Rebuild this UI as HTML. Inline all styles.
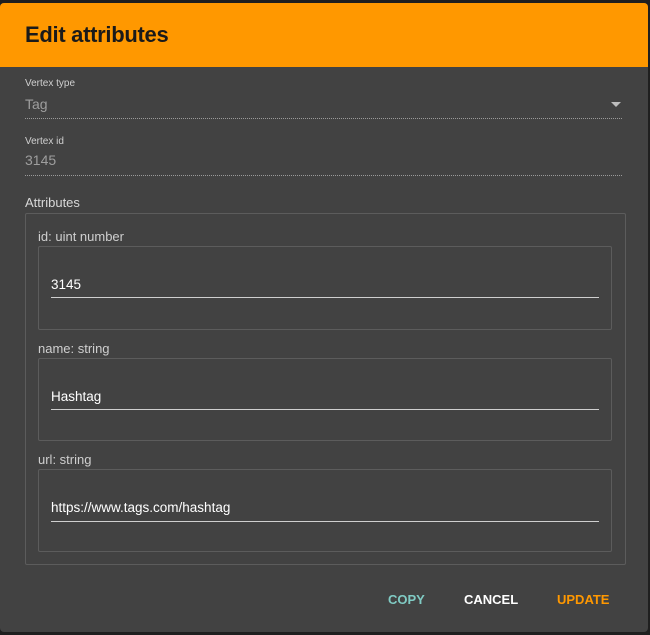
<!DOCTYPE html>
<html><head><style>
*{margin:0;padding:0;box-sizing:border-box}
body{width:650px;height:635px;background:#1f1f1f;font-family:"Liberation Sans",sans-serif;position:relative;overflow:hidden}
.dlg{position:absolute;left:0;top:3px;width:648px;height:629px;background:#424242;border-radius:4px;overflow:hidden}
.hdr{position:absolute;left:0;top:0;width:100%;height:64px;background:#ff9800}
.hdr h1{position:absolute;left:25px;top:19px;font-size:22px;font-weight:bold;color:#1a1a1a;letter-spacing:-0.3px}
.a{position:absolute}
.lbl{font-size:10px;color:#d0d0d0}
.val{font-size:14px;color:#9e9e9e}
.dot{position:absolute;left:25px;width:597px;border-top:1px dotted #9a9a9a;height:0}
.box{position:absolute;border:1px solid #5c5c5c;border-radius:2px}
.fl{font-size:13px;color:#cfcfcf}
.in{font-size:13.5px;color:#fff}
.ul{position:absolute;left:51px;width:548px;height:1px;background:#cfcfcf}
.btn{position:absolute;top:589px;font-size:13px;font-weight:bold}
</style></head><body>
<div class="dlg">
<div class="hdr"><h1>Edit attributes</h1></div>
<div class="a lbl" style="left:25px;top:75px">Vertex type</div>
<div class="a val" style="left:25px;top:93px">Tag</div>
<div class="a" style="left:611px;top:99px;width:0;height:0;border-left:5px solid transparent;border-right:5px solid transparent;border-top:5px solid #bdbdbd"></div>
<div class="dot" style="top:115px"></div>
<div class="a lbl" style="left:25px;top:133px">Vertex id</div>
<div class="a val" style="left:25px;top:149px">3145</div>
<div class="dot" style="top:172px"></div>
<div class="a" style="left:25px;top:192px;font-size:13px;color:#d8d8d8">Attributes</div>
<div class="box" style="left:25px;top:210px;width:601px;height:352px"></div>

<div class="a fl" style="left:38px;top:226px">id: uint number</div>
<div class="box" style="left:38px;top:243px;width:574px;height:84px"></div>
<div class="a in" style="left:51px;top:274px">3145</div>
<div class="ul" style="top:294px"></div>

<div class="a fl" style="left:38px;top:338px">name: string</div>
<div class="box" style="left:38px;top:355px;width:574px;height:83px"></div>
<div class="a in" style="left:51px;top:386px">Hashtag</div>
<div class="ul" style="top:406px"></div>

<div class="a fl" style="left:38px;top:449px">url: string</div>
<div class="box" style="left:38px;top:466px;width:574px;height:83px"></div>
<div class="a in" style="left:51px;top:497px">https://www.tags.com/hashtag</div>
<div class="ul" style="top:518px"></div>

<div class="btn" style="left:388px;color:#80cbc4">COPY</div>
<div class="btn" style="left:464px;color:#fff">CANCEL</div>
<div class="btn" style="left:557px;color:#ff9800">UPDATE</div>
</div>
</body></html>
